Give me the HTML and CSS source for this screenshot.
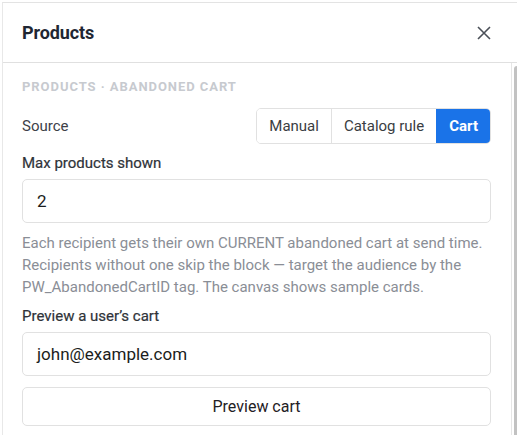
FILE: index.html
```html
<!DOCTYPE html>
<html>
<head>
<meta charset="utf-8">
<link rel="stylesheet" href="styles.css">
</head>
<body>
<div class="panel">
  <header class="head">
    <h1 class="title">Products</h1>
    <button class="close" aria-label="Close">
      <svg width="14" height="14" viewBox="0 0 14 14"><path d="M1 1L13 13M13 1L1 13" stroke="#4b5058" stroke-width="1.6" fill="none"/></svg>
    </button>
  </header>
  <div class="bodywrap">
    <div class="content">
      <div class="eyebrow">Products · Abandoned cart</div>
      <div class="source-row">
        <span class="source-label">Source</span>
        <div class="seg">
          <button class="seg-btn">Manual</button>
          <button class="seg-btn">Catalog rule</button>
          <button class="seg-btn active">Cart</button>
        </div>
      </div>
      <label class="label gap-top">Max products shown</label>
      <div class="input">2</div>
      <p class="help">Each recipient gets their own CURRENT abandoned cart at send time. Recipients without one skip the block — target the audience by the PW_AbandonedCartID tag. The canvas shows sample cards.</p>
      <label class="label">Preview a user’s cart</label>
      <div class="input">john@example.com</div>
      <button class="btn">Preview cart</button>
    </div>
    <div class="scrollbar"><div class="thumb"></div></div>
  </div>
</div>
</body>
</html>
```
FILE: styles.css
```css
* { box-sizing: border-box; }
html, body { margin: 0; padding: 0; background: #fff; }
body {
  font-family: Roboto, "Noto Sans", Arial, sans-serif;
  color: #1f2328;
  overflow: hidden;
  height: 435px;
}
.panel {
  margin: 2px 0 0 2px;
  border-top: 1px solid #e3e3e3;
  border-left: 1px solid #e8e8e8;
  height: 433px;
  display: flex;
  flex-direction: column;
}
.head {
  height: 60px;
  flex: none;
  display: flex;
  align-items: center;
  justify-content: space-between;
  padding: 0 26px 0 19px;
  border-bottom: 1px solid #e0e0e0;
}
.title {
  margin: 0;
  font-size: 18px;
  font-weight: 700;
  color: #1f2733;
  letter-spacing: -0.1px;
}
.close {
  border: 0;
  background: none;
  padding: 0;
  width: 14px;
  height: 14px;
  display: flex;
}
.bodywrap {
  flex: 1;
  display: flex;
  min-height: 0;
}
.content {
  flex: 1;
  padding: 16px 20px 0 19px;
  display: flex;
  flex-direction: column;
}
.eyebrow {
  font-size: 13px;
  line-height: 16px;
  font-weight: 700;
  text-transform: uppercase;
  letter-spacing: 0.95px;
  color: #c7cacf;
}
.source-row {
  margin-top: 13px;
  display: flex;
  align-items: center;
  justify-content: space-between;
}
.source-label {
  font-size: 15px;
  color: #3d4148;
}
.seg {
  display: flex;
  height: 36px;
  border: 1px solid #e1e1e1;
  border-radius: 5px;
  overflow: hidden;
}
.seg-btn {
  border: 0;
  border-left: 1px solid #e1e1e1;
  background: #fff;
  font-family: inherit;
  font-size: 15px;
  color: #3a3d42;
  padding: 0 12px;
}
.seg-btn:first-child { border-left: 0; }
.seg-btn.active {
  background: #1a73e8;
  color: #fff;
  font-weight: 700;
  border-left-color: #1a73e8;
}
.label {
  display: block;
  font-size: 15px;
  line-height: 20px;
  font-weight: 400;
  color: #2f3339;
  margin-top: 8px;
  -webkit-text-stroke: 0.2px #2f3339;
}
.label.gap-top { margin-top: 9px; }
.input {
  margin-top: 6px;
  height: 44px;
  border: 1px solid #e1e1e1;
  border-radius: 5px;
  display: flex;
  align-items: center;
  padding: 0 14px;
  font-size: 17px;
  color: #1b1d20;
}
.help {
  margin: 9px 0 0;
  font-size: 15px;
  line-height: 22px;
  color: #8a8e96;
}
.btn {
  margin-top: 11px;
  height: 39px;
  border: 1px solid #e1e1e1;
  border-radius: 5px;
  background: #fff;
  font-family: inherit;
  font-size: 16px;
  color: #1f2125;
}
.scrollbar {
  flex: none;
  width: 6px;
  border-left: 1px solid #e6e6e6;
  padding: 3px 0 0 2px;
}
.thumb {
  width: 6px;
  height: 100%;
  background: #c2c2c2;
  border-radius: 3px 3px 0 0;
}
```
